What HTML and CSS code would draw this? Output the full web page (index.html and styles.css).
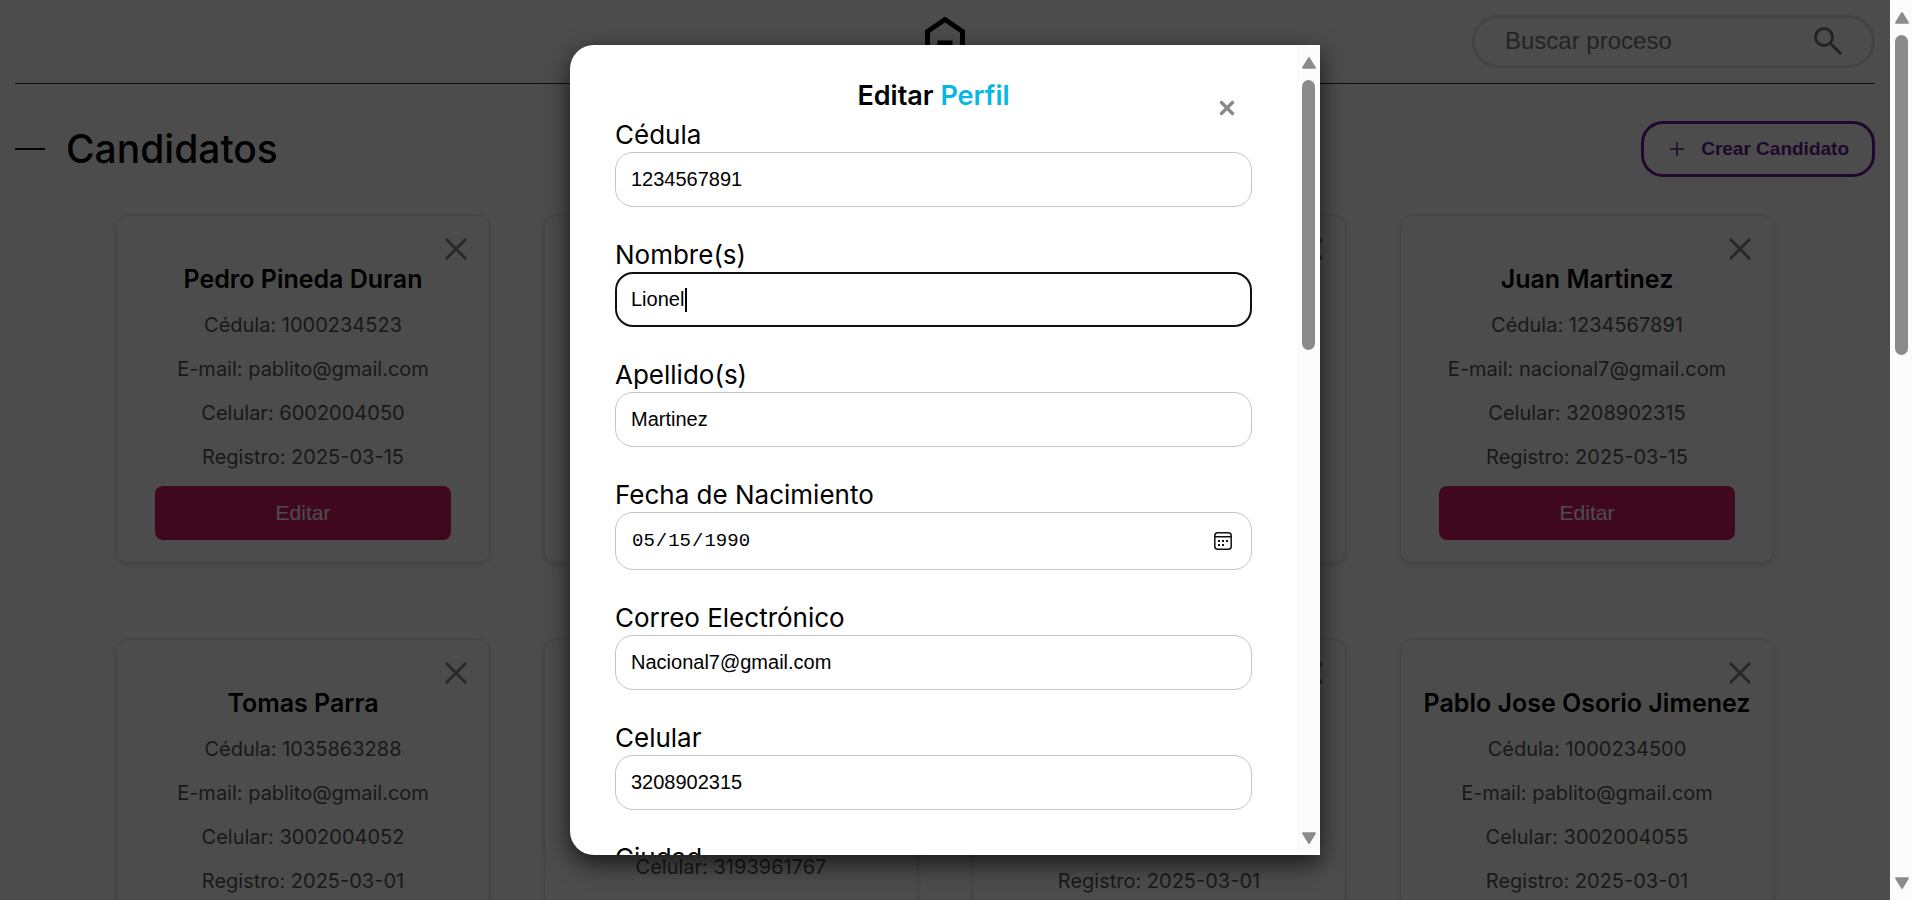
FILE: index.html
```html
<!DOCTYPE html>
<html lang="es">
<head>
<meta charset="utf-8">
<title>Candidatos</title>
<link rel="stylesheet" href="styles.css">
</head>
<body>
<div class="shell">
  <div class="page">
    <header class="topbar">
      <a class="logo" href="#" aria-label="Inicio">
        <svg width="42" height="56" viewBox="0 0 42 56" fill="none" stroke="#000" stroke-width="5"><path d="M3.500 54V17.500L21 5.500l17.500 12V54"/><path d="M13.500 29.500h15" stroke-width="6"/></svg>
      </a>
      <form class="search" role="search">
        <input type="search" placeholder="Buscar proceso" aria-label="Buscar proceso">
        <button type="button" aria-label="Buscar">
          <svg width="30" height="30" viewBox="0 0 30 30" fill="none" stroke="#777" stroke-width="3"><circle cx="11" cy="11" r="8.500"/><path d="M17 17l11 11"/></svg>
        </button>
      </form>
    </header>
    <div class="heading">
      <h1>Candidatos</h1>
      <button class="create" type="button">
        <svg width="14" height="14" viewBox="0 0 14 14" stroke="currentColor" stroke-width="1.500"><path d="M7 0v14M0 7h14"/></svg>
        Crear Candidato
      </button>
    </div>
    <main class="cards" id="cards"></main>
  </div>
  <div class="overlay">
    <section class="modal" role="dialog" aria-labelledby="modal-title">
      <div class="modal-body">
        <form class="form">
          <div class="modal-head">
            <h2 id="modal-title">Editar <span>Perfil</span></h2>
            <button class="close" type="button" aria-label="Cerrar">
              <svg width="16" height="16" viewBox="0 0 16 16" stroke="currentColor" stroke-width="3.200"><path d="M1.500 1.500l13 13M14.500 1.500l-13 13"/></svg>
            </button>
          </div>
          <div class="field"><label for="cedula">Cédula</label><input id="cedula" type="text" value="1234567891"></div>
          <div class="field"><label for="nombre">Nombre(s)</label><input id="nombre" class="active" type="text" value="Lionel"></div>
          <div class="field"><label for="apellido">Apellido(s)</label><input id="apellido" type="text" value="Martinez"></div>
          <div class="field"><label for="fecha">Fecha de Nacimiento</label><input id="fecha" type="date" value="1990-05-15"></div>
          <div class="field"><label for="correo">Correo Electrónico</label><input id="correo" type="email" value="Nacional7@gmail.com"></div>
          <div class="field"><label for="celular">Celular</label><input id="celular" type="tel" value="3208902315"></div>
          <div class="field"><label for="ciudad">Ciudad</label><input id="ciudad" type="text"></div>
        </form>
      </div>
      <div class="scrollbar scrollbar-modal" aria-hidden="true">
        <svg class="arrow" viewBox="0 0 15 12"><path d="M7.500 1.500l5.500 9H2z"/></svg>
        <div class="track"><div class="thumb"></div></div>
        <svg class="arrow" viewBox="0 0 15 12"><path d="M7.500 10.500l5.500-9H2z"/></svg>
      </div>
    </section>
  </div>
  <div class="scrollbar" aria-hidden="true">
    <svg class="arrow" viewBox="0 0 15 12"><path d="M7.500 1.500l5.500 9H2z"/></svg>
    <div class="track"><div class="thumb"></div></div>
    <svg class="arrow" viewBox="0 0 15 12"><path d="M7.500 10.500l5.500-9H2z"/></svg>
  </div>
</div>
<script src="app.js"></script>
</body>
</html>
```
FILE: app.js
```js
const people = [
  ["Pedro Pineda Duran", "1000234523", "pablito@gmail.com", "6002004050", "2025-03-15"],
  ["Maria Lopez", "1000234511", "maria@gmail.com", "3002004051", "2025-03-15"],
  ["Carlos Ruiz", "1000234512", "carlos@gmail.com", "3002004053", "2025-03-15"],
  ["Juan Martinez", "1234567891", "nacional7@gmail.com", "3208902315", "2025-03-15"],
  ["Tomas Parra", "1035863288", "pablito@gmail.com", "3002004052", "2025-03-01"],
  ["Maria Fernanda Gonzalez Rodriguez", "1000234514", "maria@gmail.com", "3193961767", "2025-03-01"],
  ["Ana Gomez", "1000234515", "ana@gmail.com", "3002004054", "2025-03-01"],
  ["Pablo Jose Osorio Jimenez", "1000234500", "pablito@gmail.com", "3002004055", "2025-03-01"]
];

document.getElementById("cards").innerHTML = people.map(([name, id, mail, phone, date]) => `
  <article class="card">
    <button class="remove" type="button" aria-label="Eliminar ${name}">
      <svg width="22" height="22" viewBox="0 0 22 22" stroke="currentColor" stroke-width="3"><path d="M1 1l20 20M21 1L1 21"/></svg>
    </button>
    <h3>${name}</h3>
    <p>Cédula: ${id}</p>
    <p>E-mail: ${mail}</p>
    <p>Celular: ${phone}</p>
    <p>Registro: ${date}</p>
    <button class="edit" type="button">Editar</button>
  </article>`).join("");
```
FILE: styles.css
```css
* { box-sizing: border-box; }

body {
  margin: 0;
  background: #fff;
  color: #000;
  font-family: Inter, "Open Sans", sans-serif;
}

button, input { font-family: "Liberation Sans", Arial, sans-serif; }

button { cursor: pointer; }

.shell {
  display: grid;
  grid-template-columns: 1fr 23px;
  height: 100vh;
  overflow: hidden;
}

.page {
  grid-area: 1 / 1;
  padding: 0 15px;
  height: 100vh;
  overflow: hidden;
}

.topbar {
  display: grid;
  grid-template-columns: 1fr auto 1fr;
  align-items: center;
  height: 84px;
  border-bottom: 1px solid #333;
}

.logo {
  grid-column: 2;
  display: flex;
}

.search {
  justify-self: end;
  display: flex;
  align-items: center;
  width: 403px;
  height: 53px;
  margin-bottom: 1px;
  padding: 0 29px 0 30px;
  border: 3px solid #e0e0e0;
  border-radius: 27px;
}

.search input {
  flex: 1;
  min-width: 0;
  padding: 0;
  border: 0;
  outline: 0;
  background: none;
  font-size: 24px;
}

.search input::placeholder { color: #757575; }

.search button {
  display: flex;
  padding: 0;
  border: 0;
  background: none;
}

.heading {
  display: flex;
  align-items: center;
  justify-content: space-between;
  margin-top: 37px;
}

h1 {
  display: flex;
  align-items: center;
  gap: 21px;
  margin: 0;
  font-size: 39px;
  font-weight: 500;
  line-height: 56px;
}

h1::before {
  content: "";
  width: 30px;
  height: 2px;
  background: #000;
}

.create {
  display: flex;
  align-items: center;
  gap: 17px;
  height: 56px;
  padding: 0 23px 0 26px;
  border: 3px solid #6a1b9a;
  border-radius: 22px;
  background: #fff;
  color: #6a1b9a;
  font-size: 19px;
  font-weight: 700;
}

.cards {
  display: grid;
  grid-template-columns: repeat(4, 1fr);
  column-gap: 54px;
  row-gap: 76px;
  margin-top: 38px;
  padding: 0 101px;
}

.card {
  position: relative;
  display: flex;
  flex-direction: column;
  align-items: center;
  padding: 48px 20px 22px;
  border: 1px solid #e0e0e0;
  border-radius: 12px;
  box-shadow: 0 2px 6px rgba(0, 0, 0, .15);
  text-align: center;
}

.card h3 {
  margin: 0 0 16px;
  font-size: 25px;
  font-weight: 600;
  line-height: 30px;
}

.card p {
  margin: 0 0 14px;
  color: #555;
  font-size: 20px;
  line-height: 30px;
}

.remove {
  position: absolute;
  top: 22px;
  right: 22px;
  display: flex;
  padding: 0;
  border: 0;
  background: none;
  color: #888;
}

.edit {
  width: 296px;
  height: 54px;
  border: 0;
  border-radius: 8px;
  background: #d81b6a;
  color: #fff;
  font-size: 21px;
}

.overlay {
  grid-area: 1 / 1;
  z-index: 1;
  display: flex;
  align-items: center;
  justify-content: center;
  height: 100vh;
  background: rgba(0, 0, 0, .7);
}

.modal {
  display: flex;
  width: 750px;
  height: 90vh;
  overflow: hidden;
  border-radius: 24px 0 0 24px;
  background: #fff;
  box-shadow: 0 8px 24px rgba(0, 0, 0, .7);
}

.modal-body {
  flex: 1;
  overflow: hidden;
  padding: 30px 45px 0;
}

.modal-head {
  position: relative;
  text-align: center;
}

.modal-head h2 {
  margin: 0;
  font-size: 27px;
  font-weight: 600;
  line-height: 42px;
}

.modal-head h2 span { color: #06b6e4; }

.close {
  position: absolute;
  top: 25px;
  right: 17px;
  display: flex;
  padding: 0;
  border: 0;
  background: none;
  color: #888;
}

.form {
  display: flex;
  flex-direction: column;
}

.field {
  display: flex;
  flex-direction: column;
  margin-bottom: 30px;
}

.field label {
  font-size: 26px;
  line-height: 35px;
}

.field input {
  height: 55px;
  padding: 0 15px;
  border: 1px solid #c4c4c4;
  border-radius: 18px;
  outline: 0;
  background: #fff;
  color: #000;
  font-size: 20px;
}

/* The focused field shows its text cursor after the name. */
.field input.active {
  padding: 0 14px;
  border: 2px solid #101010;
  background: linear-gradient(#000, #000) 68px 50% / 2px 24px no-repeat #fff;
}

.field input[type="date"] {
  height: 58px;
  font-family: "Liberation Mono", monospace;
  font-size: 19px;
}

.field input[type="date"]::-webkit-calendar-picker-indicator {
  width: 18px;
  height: 18px;
  margin-right: 4px;
  padding: 0;
  background: url("data:image/svg+xml,%3Csvg xmlns='http://www.w3.org/2000/svg' viewBox='0 0 18 18'%3E%3Crect x='.8' y='.8' width='16.400' height='16.400' rx='3' fill='none' stroke='%23111' stroke-width='1.500'/%3E%3Cpath d='M1 4.800h16' stroke='%23111' stroke-width='1.500'/%3E%3Cpath d='M4 9h2M8 9h2M12 9h2M4 13h2M8 13h2' stroke='%23111' stroke-width='2'/%3E%3C/svg%3E") center / contain no-repeat;
}

.scrollbar {
  display: flex;
  flex-direction: column;
  align-items: center;
  width: 23px;
  height: 100%;
  padding: 11px 0 10px;
  background: #fcfcfc;
}

.arrow {
  width: 16px;
  height: 14px;
  fill: #8b8b8b;
  stroke: #8b8b8b;
  stroke-width: 2;
  stroke-linejoin: round;
}

.track {
  flex: 1;
  width: 13px;
  padding-top: 10px;
}

.thumb {
  height: 38%;
  border-radius: 7px;
  background: #8b8b8b;
}

.scrollbar-modal .thumb { height: 36%; }
```
